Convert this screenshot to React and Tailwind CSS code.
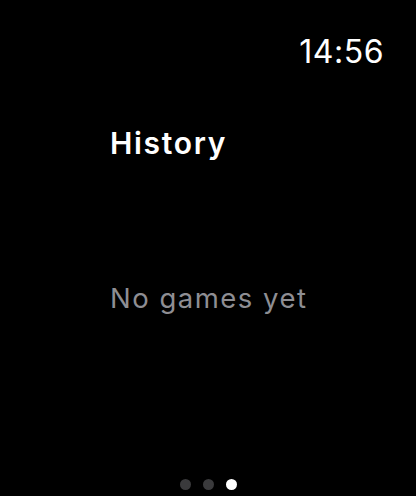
export default function App() {
  const pages = [false, false, true];

  return (
    <div
      className="w-[416px] h-[496px] bg-black text-white flex flex-col overflow-hidden"
      style={{ fontFamily: 'Inter, "Noto Sans", sans-serif' }}
    >
      <div className="flex justify-end pr-[32px] pt-[33px] h-[80px]">
        <span className="text-[32px] leading-[38px] tracking-[0.5px]">14:56</span>
      </div>

      <div className="pl-[110px] pt-[45px]">
        <h1 className="text-[30px] leading-[36px] font-semibold tracking-[1.7px]">History</h1>
      </div>

      <div className="pl-[110px] pt-[121px]">
        <p className="text-[27.5px] leading-[32px] tracking-[1.5px] text-[#8e8e93]">No games yet</p>
      </div>

      <div className="mt-auto flex justify-center gap-[12px] pb-[6px]">
        {pages.map((active, i) => (
          <span
            key={i}
            className={`w-[11px] h-[11px] rounded-full ${active ? 'bg-white' : 'bg-[#3a3a3c]'}`}
          />
        ))}
      </div>
    </div>
  );
}
